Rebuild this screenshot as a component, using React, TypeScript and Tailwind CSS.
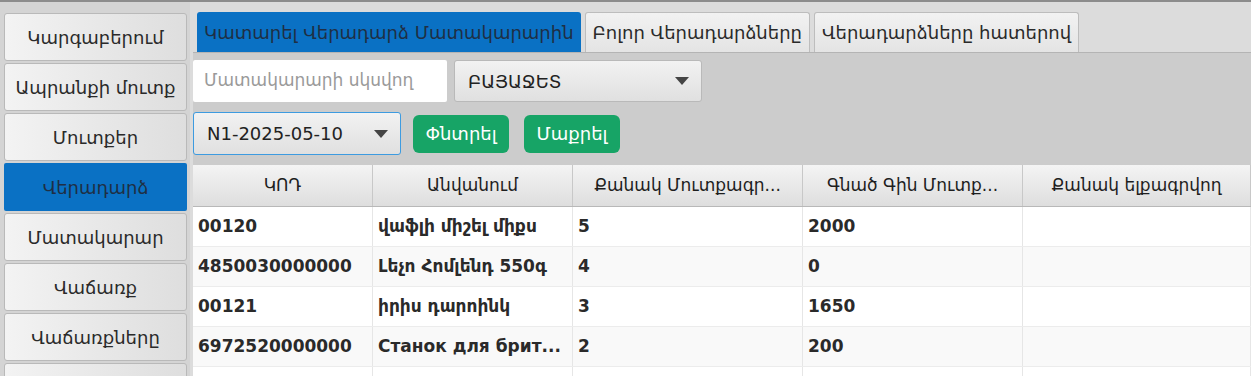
const font = { fontFamily: '"DejaVu Sans", "Noto Sans", sans-serif' };

const navItems = ['Կարգաբերում', 'Ապրանքի մուտք', 'Մուտքեր', 'Վերադարձ', 'Մատակարար', 'Վաճառք', 'Վաճառքները', ''];

const tabs = ['Կատարել Վերադարձ Մատակարարին', 'Բոլոր Վերադարձները', 'Վերադարձները հատերով'];

const columns = [
    { title: 'ԿՈԴ', w: 'w-[180px]' },
    { title: 'Անվանում', w: 'w-[200px]' },
    { title: 'Քանակ Մուտքագր...', w: 'w-[230px]' },
    { title: 'Գնած Գին Մուտք...', w: 'w-[220px]' },
    { title: 'Քանակ ելքագրվող', w: 'flex-1' },
];

const rows = [
    ['00120', 'վաֆլի միշել  միքս', '5', '2000', ''],
    ['4850030000000', 'Լեչո Հոմլենդ 550գ', '4', '0', ''],
    ['00121', 'իրիս դարոինկ', '3', '1650', ''],
    ['6972520000000', 'Станок для брит...', '2', '200', ''],
    ['', '', '', '', ''],
];

function Caret() {
    return (
        <svg width="14" height="8" viewBox="0 0 14 8" className="fill-[#444]">
            <path d="M0 0 L14 0 L7 8 Z" />
        </svg>
    );
}

export default function App() {
    return (
        <div className="flex h-[376px] w-[1251px] overflow-hidden border-t-2 border-[#8c8c8c] bg-[#cccccc] text-[#222]" style={font}>
            {/* Sidebar */}
            <aside className="flex w-[193px] shrink-0 flex-col gap-[2px] border-r-[3px] border-[#dcdcdc] bg-[#d4d4d4] pl-[4px] pr-[3px] pt-[11px]">
                {navItems.map((item) =>
                    item === 'Վերադարձ' ? (
                        <div
                            key={item}
                            className="flex h-[48px] shrink-0 items-center justify-center rounded-[2px] bg-[#0a71c4] text-[18px] text-[#1f2f44]"
                        >
                            {item}
                        </div>
                    ) : (
                        <div
                            key={item || 'empty'}
                            className="flex h-[48px] shrink-0 items-center justify-center rounded-[3px] border border-[#b9b9b9] bg-gradient-to-r from-[#f3f3f3] to-[#dedede] text-[18px] text-[#2a2a2a]"
                        >
                            {item}
                        </div>
                    )
                )}
            </aside>

            {/* Main */}
            <main className="flex min-w-0 flex-1 flex-col">
                {/* Tab header */}
                <div className="flex h-[51px] shrink-0 items-end gap-[4px] border-b border-[#b4b4b4] bg-[#dcdcdc] pl-[4px]">
                    {tabs.map((t, i) => (
                        <div
                            key={t}
                            className={
                                i === 0
                                    ? 'flex h-[40px] items-center rounded-t-[3px] bg-[#0a71c4] px-[7px] text-[18px] text-[#1f2f44]'
                                    : 'flex h-[40px] items-center rounded-t-[3px] border border-b-0 border-[#bdbdbd] bg-gradient-to-b from-[#f2f2f2] to-[#e4e4e4] px-[7px] text-[18px] text-[#2a2a2a]'
                            }
                        >
                            {t}
                        </div>
                    ))}
                </div>

                {/* Filters */}
                <div className="flex gap-[7px] pt-[7px]">
                    <div className="flex h-[42px] w-[254px] items-center rounded-[2px] bg-white px-[11px] text-[17px] text-[#9a9a9a]">
                        Մատակարարի սկսվող
                    </div>
                    <div className="flex h-[42px] w-[248px] items-center justify-between rounded-[3px] border border-[#b9b9b9] bg-gradient-to-b from-[#f2f2f2] to-[#e0e0e0] pl-[13px] pr-[12px] text-[18px]">
                        <span>ԲԱՅԱՋԵՏ</span>
                        <Caret />
                    </div>
                </div>

                <div className="flex items-center gap-[12px] pt-[10px]">
                    <div className="flex h-[43px] w-[208px] items-center justify-between rounded-[3px] border border-[#3d9be0] bg-gradient-to-b from-[#f2f2f2] to-[#e0e0e0] pl-[13px] pr-[12px] text-[18px]">
                        <span>N1-2025-05-10</span>
                        <Caret />
                    </div>
                    <button className="flex h-[38px] w-[96px] items-center justify-center rounded-[6px] bg-[#17a466] text-[18px] text-white">
                        Փնտրել
                    </button>
                    <button className="ml-[3px] flex h-[38px] w-[96px] items-center justify-center rounded-[6px] bg-[#17a466] text-[18px] text-white">
                        Մաքրել
                    </button>
                </div>

                {/* Table */}
                <div className="mt-[10px] flex flex-1 flex-col bg-white">
                    <div className="flex h-[42px] shrink-0 border-b border-[#b8b8b8] bg-gradient-to-b from-[#f4f4f4] to-[#dedede]">
                        {columns.map((c) => (
                            <div
                                key={c.title}
                                className={`${c.w} flex items-center justify-center border-r border-[#c8c8c8] text-[17px] text-[#1e1e1e]`}
                            >
                                {c.title}
                            </div>
                        ))}
                    </div>
                    {rows.map((r, ri) => (
                        <div key={ri} className={`flex h-[40px] shrink-0 border-b border-[#ececec] ${ri % 2 ? 'bg-[#f9f9f9]' : 'bg-white'}`}>
                            {r.map((cell, ci) => (
                                <div
                                    key={ci}
                                    className={`${columns[ci].w} flex items-center overflow-hidden whitespace-nowrap border-r border-[#e6e6e6] px-[5px] text-[17px] font-bold text-[#2a2a2a]`}
                                >
                                    {cell}
                                </div>
                            ))}
                        </div>
                    ))}
                </div>
            </main>
        </div>
    );
}
